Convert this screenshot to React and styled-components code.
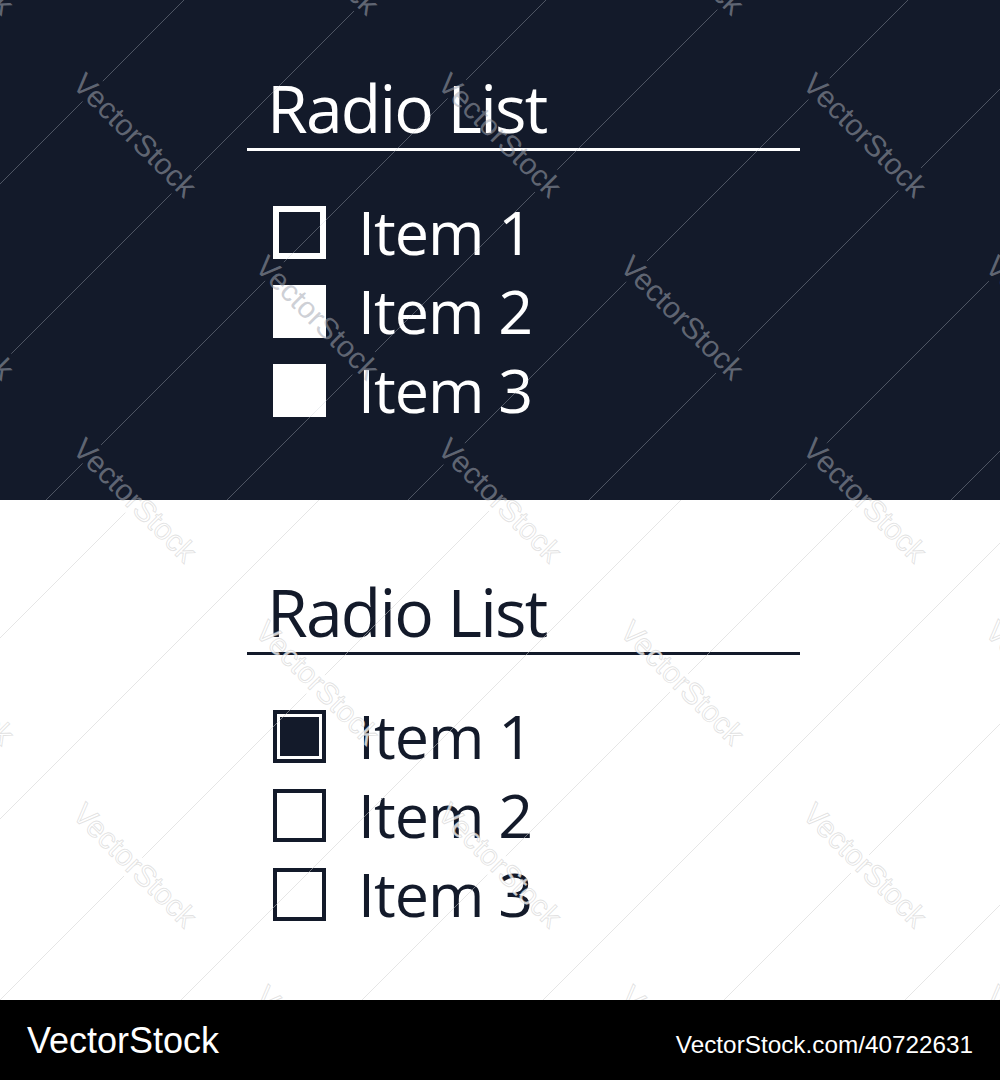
import React from "react";
import styled, { createGlobalStyle } from "styled-components";

const NAVY = "#131a2a";
const WHITE = "#ffffff";

const GlobalStyle = createGlobalStyle`
  html, body {
    margin: 0;
    padding: 0;
    background: ${WHITE};
  }
  body {
    font-family: "Open Sans", "Noto Sans", sans-serif;
  }
`;

const Page = styled.main`
  width: 1000px;
  display: flex;
  flex-direction: column;
`;

const Panel = styled.section`
  position: relative;
  height: 500px;
  box-sizing: border-box;
  padding-top: ${(p) => (p.$dark ? 67 : 71)}px;
  background: ${(p) => (p.$dark ? NAVY : WHITE)};
  color: ${(p) => (p.$dark ? WHITE : NAVY)};
  overflow: hidden;
`;

const Card = styled.div`
  margin-left: 247px;
  width: 553px;
  display: flex;
  flex-direction: column;
`;

const Title = styled.h2`
  margin: 0;
  padding-left: 20px;
  font-family: "Open Sans", sans-serif;
  font-weight: 400;
  font-size: 66px;
  line-height: 80px;
  letter-spacing: -1.8px;
`;

const Rule = styled.div`
  margin-top: 1px;
  height: 3px;
  background: currentColor;
`;

const List = styled.ul`
  list-style: none;
  margin: 41px 0 0;
  padding: 0 0 0 26px;
  display: flex;
  flex-direction: column;
`;

const Row = styled.li`
  display: flex;
  align-items: flex-start;
  height: 79px;
`;

const boxLook = {
  hollow: `border: 6px solid ${WHITE}; background: transparent;`,
  solid: `border: none; background: ${WHITE};`,
  checked: `border: 4px solid ${NAVY}; background: ${NAVY}; box-shadow: inset 0 0 0 3px ${WHITE};`,
  empty: `border: 4px solid ${NAVY}; background: transparent;`,
};

const Box = styled.span`
  flex: none;
  margin-top: 14px;
  width: 53px;
  height: 53px;
  box-sizing: border-box;
  ${(p) => boxLook[p.$look]}
`;

const Label = styled.span`
  margin-left: 32px;
  font-family: "Open Sans", sans-serif;
  font-size: 61px;
  line-height: 79px;
  letter-spacing: -1px;
`;

const Footer = styled.footer`
  height: 80px;
  box-sizing: border-box;
  padding: 20px 27px 0 27px;
  background: #000;
  color: ${WHITE};
  display: flex;
  align-items: baseline;
  justify-content: space-between;
  font-family: "Liberation Sans", Arial, sans-serif;
`;

const Brand = styled.span`
  font-size: 36px;
`;

const Ref = styled.span`
  font-size: 24.3px;
`;

const Overlay = styled.svg`
  position: absolute;
  inset: 0;
  width: 1000px;
  height: 500px;
  pointer-events: none;
`;

/* Stock watermark: a lattice of rotated wordmarks and thin diagonal rules. */
const tones = {
  dark: {
    text: "rgba(163,168,178,0.55)",
    stroke: "none",
    line: "rgba(200,205,215,0.33)",
  },
  light: {
    text: "rgba(255,255,255,0.8)",
    stroke: "rgba(190,190,190,0.45)",
    line: "rgba(205,205,205,0.5)",
  },
};

function marks(top) {
  const out = [];
  for (let n = -1; n <= 6; n++) {
    const y = 135 + 182.5 * n - top;
    if (y < -130 || y > 630) continue;
    const x0 = n % 2 === 0 ? 135 : -47.5;
    for (let i = 0; i < 4; i++) {
      out.push({ x: x0 + 365 * i, y });
    }
  }
  return out;
}

function Watermark({ tone, top, lineOffset }) {
  const t = tones[tone];
  const id = `wm-${tone}`;
  const spots = marks(top);
  const lines = [];
  for (let k = -1; k <= 9; k++) lines.push(lineOffset + 181 * k);
  const wordStyle = {
    fontFamily: '"Liberation Sans", Arial, sans-serif',
    fontSize: 30,
  };
  return (
    <Overlay viewBox="0 0 1000 500" aria-hidden="true">
      <defs>
        <mask id={id} maskUnits="userSpaceOnUse" x="0" y="0" width="1000" height="500">
          <rect x="0" y="0" width="1000" height="500" fill="#fff" />
          {spots.map((s, i) => (
            <text
              key={i}
              x={s.x}
              y={s.y}
              textAnchor="middle"
              dominantBaseline="central"
              transform={`rotate(45 ${s.x} ${s.y})`}
              fill="#000"
              stroke="#000"
              strokeWidth="10"
              style={wordStyle}
            >
              VectorStock
            </text>
          ))}
        </mask>
      </defs>
      <g mask={`url(#${id})`} stroke={t.line} strokeWidth="1">
        {lines.map((c) => (
          <line key={c} x1={c} y1={0} x2={c - 500} y2={500} />
        ))}
      </g>
      {spots.map((s, i) => (
        <text
          key={i}
          x={s.x}
          y={s.y}
          textAnchor="middle"
          dominantBaseline="central"
          transform={`rotate(45 ${s.x} ${s.y})`}
          fill={t.text}
          stroke={t.stroke}
          strokeWidth="0.9"
          style={wordStyle}
        >
          VectorStock
        </text>
      ))}
    </Overlay>
  );
}

const darkItems = [
  { label: "Item 1", look: "hollow" },
  { label: "Item 2", look: "solid" },
  { label: "Item 3", look: "solid" },
];

const lightItems = [
  { label: "Item 1", look: "checked" },
  { label: "Item 2", look: "empty" },
  { label: "Item 3", look: "empty" },
];

function RadioList({ items }) {
  return (
    <Card>
      <Title>Radio List</Title>
      <Rule />
      <List>
        {items.map((it) => (
          <Row key={it.label}>
            <Box $look={it.look} />
            <Label>{it.label}</Label>
          </Row>
        ))}
      </List>
    </Card>
  );
}

export default function App() {
  return (
    <>
      <GlobalStyle />
      <Page>
        <Panel $dark>
          <RadioList items={darkItems} />
          <Watermark tone="dark" top={0} lineOffset={3} />
        </Panel>
        <Panel>
          <RadioList items={lightItems} />
          <Watermark tone="light" top={500} lineOffset={138} />
        </Panel>
        <Footer>
          <Brand>VectorStock</Brand>
          <Ref>VectorStock.com/40722631</Ref>
        </Footer>
      </Page>
    </>
  );
}
